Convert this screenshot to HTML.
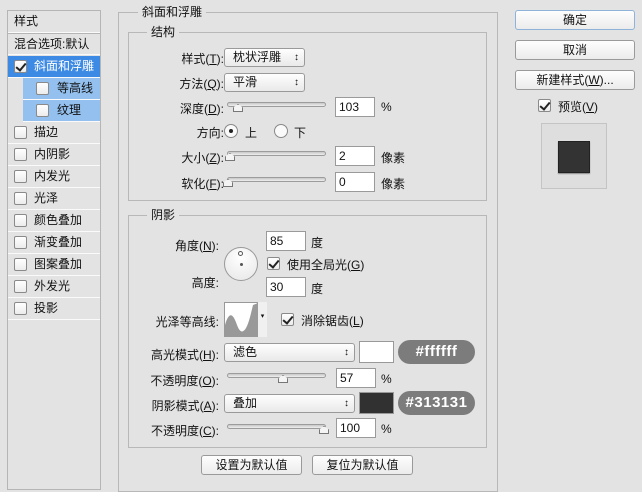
<!DOCTYPE html>
<html><head><meta charset="utf-8"><style>
*{box-sizing:border-box}
body{margin:0;width:642px;height:480px;background:#e3e3e3;font-family:"Liberation Sans","Noto Sans CJK SC",sans-serif;font-size:12px;color:#111;position:relative;overflow:hidden}
.a{position:absolute}
.lp{left:7px;top:10px;width:94px;height:480px;border:1px solid #b5b5b5;background:#e3e3e3}
.row{position:absolute;left:0;width:92px;height:22px;border-bottom:1px solid #fafafa;line-height:21px}
.cb{position:absolute;width:13px;height:13px;border:1px solid #8a8a8a;border-radius:2px;background:linear-gradient(#fff,#ececec)}
.cb.on::after{content:"";position:absolute;left:3px;top:0px;width:4px;height:8px;border:solid #222;border-width:0 2px 2px 0;transform:rotate(40deg)}
.grp{border:1px solid #b8b8b8}
.lbl{position:absolute;text-align:right;white-space:nowrap}
.sel{position:absolute;height:19px;border:1px solid #9a9a9a;border-radius:3px;background:linear-gradient(#fefefe,#e9e9e9);padding-left:8px;line-height:17px}
.sel::after{content:"\2195";position:absolute;right:5px;top:0;font-size:10px}
.inp{position:absolute;height:20px;background:#fff;border:1px solid #9a9a9a;padding-left:3px;line-height:18px}
.sl{position:absolute;height:5px;border:1px solid #9c9c9c;border-radius:3px;background:linear-gradient(#c8c8c8,#eee)}
.th{position:absolute;width:10px;height:8px;border:1px solid #777;background:#f4f4f4;clip-path:polygon(50% 0,100% 45%,100% 100%,0 100%,0 45%)}
.btn{position:absolute;height:20px;border:1px solid #9a9a9a;border-radius:3px;background:linear-gradient(#fefefe,#ececec);text-align:center;line-height:18px}
.pill{position:absolute;height:24px;border-radius:12px;background:#7c7c7c;color:#fff;font-weight:bold;font-size:15px;text-align:center;line-height:24px;font-family:"Liberation Sans",sans-serif;letter-spacing:0.5px}
.t{position:absolute;background:#e3e3e3;padding:0 4px}
</style></head><body>
<div class="a lp">
 <div class="row" style="top:0;padding-left:6px">样式</div>
 <div class="row" style="top:22px;padding-left:6px;border-top:1px solid #b5b5b5">混合选项:默认</div>
 <div class="row" style="top:45px;background:#3d8ae4;color:#fff"><span class="cb on" style="left:6px;top:4px"></span><span style="position:absolute;left:26px">斜面和浮雕</span></div>
 <div class="row" style="top:67px;left:15px;width:77px;background:#93c0ee"><span class="cb" style="left:13px;top:4px"></span><span style="position:absolute;left:34px">等高线</span></div>
 <div class="row" style="top:89px;left:15px;width:77px;background:#93c0ee"><span class="cb" style="left:13px;top:4px"></span><span style="position:absolute;left:34px">纹理</span></div>
 <div class="row" style="top:111px"><span class="cb" style="left:6px;top:4px"></span><span style="position:absolute;left:26px">描边</span></div>
 <div class="row" style="top:133px"><span class="cb" style="left:6px;top:4px"></span><span style="position:absolute;left:26px">内阴影</span></div>
 <div class="row" style="top:155px"><span class="cb" style="left:6px;top:4px"></span><span style="position:absolute;left:26px">内发光</span></div>
 <div class="row" style="top:177px"><span class="cb" style="left:6px;top:4px"></span><span style="position:absolute;left:26px">光泽</span></div>
 <div class="row" style="top:199px"><span class="cb" style="left:6px;top:4px"></span><span style="position:absolute;left:26px">颜色叠加</span></div>
 <div class="row" style="top:221px"><span class="cb" style="left:6px;top:4px"></span><span style="position:absolute;left:26px">渐变叠加</span></div>
 <div class="row" style="top:243px"><span class="cb" style="left:6px;top:4px"></span><span style="position:absolute;left:26px">图案叠加</span></div>
 <div class="row" style="top:265px"><span class="cb" style="left:6px;top:4px"></span><span style="position:absolute;left:26px">外发光</span></div>
 <div class="row" style="top:287px"><span class="cb" style="left:6px;top:4px"></span><span style="position:absolute;left:26px">投影</span></div>
</div>

<div class="a grp" style="left:118px;top:12px;width:380px;height:480px"></div>
<div class="t" style="left:138px;top:3px">斜面和浮雕</div>
<div class="a grp" style="left:128px;top:32px;width:359px;height:169px"></div>
<div class="t" style="left:147px;top:23px">结构</div>

<div class="lbl" style="right:418px;top:50px">样式(<u>T</u>):</div>
<div class="sel" style="left:224px;top:48px;width:81px">枕状浮雕</div>
<div class="lbl" style="right:418px;top:75px">方法(<u>Q</u>):</div>
<div class="sel" style="left:224px;top:73px;width:81px">平滑</div>
<div class="lbl" style="right:418px;top:100px">深度(<u>D</u>):</div>
<div class="sl" style="left:227px;top:102px;width:99px"></div><div class="th" style="left:233px;top:104px"></div>
<div class="inp" style="left:335px;top:97px;width:40px">103</div><div class="a" style="left:381px;top:100px">%</div>
<div class="lbl" style="right:418px;top:124px">方向:</div>
<div class="a" style="left:224px;top:124px;width:14px;height:14px;border:1px solid #888;border-radius:50%;background:#fafafa"><div class="a" style="left:4px;top:4px;width:4px;height:4px;border-radius:50%;background:#222"></div></div>
<div class="a" style="left:245px;top:124px">上</div>
<div class="a" style="left:274px;top:124px;width:14px;height:14px;border:1px solid #888;border-radius:50%;background:#fafafa"></div>
<div class="a" style="left:294px;top:124px">下</div>
<div class="lbl" style="right:418px;top:149px">大小(<u>Z</u>):</div>
<div class="sl" style="left:227px;top:151px;width:99px"></div><div class="th" style="left:225px;top:153px"></div>
<div class="inp" style="left:335px;top:146px;width:40px">2</div><div class="a" style="left:381px;top:149px">像素</div>
<div class="lbl" style="right:418px;top:175px">软化(<u>F</u>):</div>
<div class="sl" style="left:227px;top:177px;width:99px"></div><div class="th" style="left:223px;top:179px"></div>
<div class="inp" style="left:335px;top:172px;width:40px">0</div><div class="a" style="left:381px;top:175px">像素</div>

<div class="a grp" style="left:128px;top:215px;width:359px;height:233px"></div>
<div class="t" style="left:147px;top:206px">阴影</div>
<div class="lbl" style="right:423px;top:237px">角度(<u>N</u>):</div>
<div class="a" style="left:224px;top:247px;width:34px;height:34px;border:1px solid #999;border-radius:50%;background:radial-gradient(circle at 50% 30%,#fff,#e6e6e6)"><div class="a" style="left:13px;top:3px;width:5px;height:5px;border:1px solid #555;border-radius:50%"></div><div class="a" style="left:15px;top:15px;width:3px;height:3px;background:#555;border-radius:50%"></div></div>
<div class="inp" style="left:266px;top:231px;width:40px">85</div><div class="a" style="left:311px;top:234px">度</div>
<div class="cb on" style="left:267px;top:257px"></div><div class="a" style="left:287px;top:256px">使用全局光(<u>G</u>)</div>
<div class="lbl" style="right:423px;top:274px">高度:</div>
<div class="inp" style="left:266px;top:277px;width:40px">30</div><div class="a" style="left:311px;top:280px">度</div>
<div class="lbl" style="right:423px;top:313px">光泽等高线:</div>
<div class="a" style="left:224px;top:302px;width:43px;height:35px;border:1px solid #999;background:#fff">
<svg width="33" height="33" style="position:absolute;left:0;top:0"><path d="M0 33 L0 22 C4 8 8 10 12 22 C15 30 18 30 21 25 C24 20 26 10 28 2 L33 0 L33 33Z" fill="#999"/></svg>
<div class="a" style="left:32px;top:-1px;width:10px;height:35px;border-left:1px solid #999;background:#f0f0f0;font-size:7px;text-align:center;line-height:30px">▾</div></div>
<div class="cb on" style="left:281px;top:313px"></div><div class="a" style="left:301px;top:312px">消除锯齿(<u>L</u>)</div>
<div class="lbl" style="right:423px;top:346px">高光模式(<u>H</u>):</div>
<div class="sel" style="left:224px;top:343px;width:131px">滤色</div>
<div class="a" style="left:359px;top:341px;width:35px;height:22px;border:1px solid #999;background:#fff"></div>
<div class="pill" style="left:398px;top:340px;width:77px">#ffffff</div>
<div class="lbl" style="right:423px;top:372px">不透明度(<u>O</u>):</div>
<div class="sl" style="left:227px;top:373px;width:99px"></div><div class="th" style="left:278px;top:375px"></div>
<div class="inp" style="left:336px;top:368px;width:40px">57</div><div class="a" style="left:381px;top:372px">%</div>
<div class="lbl" style="right:423px;top:397px">阴影模式(<u>A</u>):</div>
<div class="sel" style="left:224px;top:394px;width:131px">叠加</div>
<div class="a" style="left:359px;top:392px;width:35px;height:22px;border:1px solid #999;background:#313131"></div>
<div class="pill" style="left:398px;top:391px;width:77px">#313131</div>
<div class="lbl" style="right:423px;top:422px">不透明度(<u>C</u>):</div>
<div class="sl" style="left:227px;top:424px;width:99px"></div><div class="th" style="left:319px;top:426px"></div>
<div class="inp" style="left:336px;top:418px;width:40px">100</div><div class="a" style="left:381px;top:422px">%</div>
<div class="btn" style="left:201px;top:455px;width:101px">设置为默认值</div>
<div class="btn" style="left:312px;top:455px;width:101px">复位为默认值</div>

<div class="btn" style="left:515px;top:10px;width:120px;border-color:#8fb3d8">确定</div>
<div class="btn" style="left:515px;top:40px;width:120px">取消</div>
<div class="btn" style="left:515px;top:70px;width:120px">新建样式(<u>W</u>)...</div>
<div class="cb on" style="left:538px;top:99px"></div><div class="a" style="left:558px;top:98px">预览(<u>V</u>)</div>
<div class="a" style="left:541px;top:123px;width:66px;height:66px;border:1px solid #c4c4c4;background:#dedede"><div class="a" style="left:16px;top:17px;width:32px;height:32px;background:#333;border:1px solid #222;box-shadow:0 1px 1px #888"></div></div>
</body></html>
